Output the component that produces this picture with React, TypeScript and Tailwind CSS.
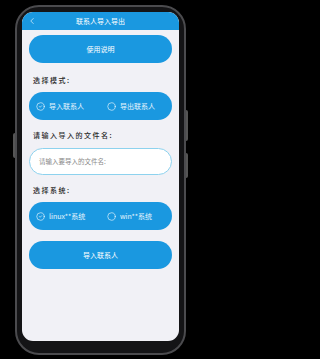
import { ChevronLeft, CircleCheck, Circle } from "lucide-react";

const kai = { fontFamily: '"Noto Sans CJK SC", "Noto Sans", sans-serif' };

function RadioRow({ items }: { items: { label: string; checked: boolean }[] }) {
  return (
    <div className="mt-[8px] flex h-[28px] items-center rounded-full bg-[#1a98e0] pl-[7px] text-white">
      {items.map((item, i) => (
        <div key={item.label} className={`flex items-center gap-[4px] ${i === 0 ? "w-[71px]" : "flex-1"}`}>
          {item.checked ? (
            <CircleCheck className="h-[9px] w-[9px]" strokeWidth={1.6} />
          ) : (
            <Circle className="h-[9px] w-[9px]" strokeWidth={1.6} />
          )}
          <span className="text-[7px] leading-none text-white/90">{item.label}</span>
        </div>
      ))}
    </div>
  );
}

function Label({ children, className }: { children: string; className: string }) {
  return (
    <div className={`pl-[4px] text-[7px] font-medium leading-none tracking-[1.5px] text-[#2a2a2a] ${className}`}>
      {children}
    </div>
  );
}

export default function App() {
  return (
    <div className="min-h-screen w-full bg-black">
      <div className="h-[359px] w-[202px] overflow-hidden bg-black pl-[15px] pt-[5px]" style={kai}>
        <div className="relative h-[350px] w-[171px] rounded-[24px] border-[2px] border-[#4b4b4e] bg-[#141416] p-[5px] pb-[12px]">
          <div className="absolute -left-[4px] top-[126px] h-[25px] w-[2px] rounded-l bg-[#555]" />
          <div className="absolute -right-[4px] top-[103px] h-[31px] w-[2px] rounded-r bg-[#555]" />
          <div className="absolute -right-[4px] top-[146px] h-[25px] w-[2px] rounded-r bg-[#555]" />
          <div className="flex h-full flex-col overflow-hidden rounded-[11px] bg-[#f1f1f6]">
            <div className="relative flex h-[18px] shrink-0 items-center justify-center rounded-t-[10px] bg-[#1a98e0]">
              <ChevronLeft className="absolute left-[5px] h-[10px] w-[10px] text-white" strokeWidth={1.5} />
              <span className="text-[7px] leading-none text-white">联系人导入导出</span>
            </div>
            <div className="flex flex-col px-[7px]">
              <button className="mt-[5px] flex h-[28px] items-center justify-center rounded-full bg-[#1a98e0] text-[7px] text-white">
                使用说明
              </button>
              <Label className="mt-[14px]">选择模式:</Label>
              <RadioRow
                items={[
                  { label: "导入联系人", checked: true },
                  { label: "导出联系人", checked: false },
                ]}
              />
              <Label className="mt-[12px]">请输入导入的文件名:</Label>
              <div className="mt-[9px] flex h-[27px] items-center rounded-full border border-[#8dd2ee] bg-white px-[9px]">
                <span className="text-[6.5px] leading-none text-[#8a8a8a]">请输入要导入的文件名:</span>
              </div>
              <Label className="mt-[12px]">选择系统:</Label>
              <RadioRow
                items={[
                  { label: "linux**系统", checked: true },
                  { label: "win**系统", checked: false },
                ]}
              />
              <button className="mt-[11px] flex h-[28px] items-center justify-center rounded-full bg-[#1a98e0] text-[7px] text-white">
                导入联系人
              </button>
            </div>
          </div>
        </div>
      </div>
    </div>
  );
}
